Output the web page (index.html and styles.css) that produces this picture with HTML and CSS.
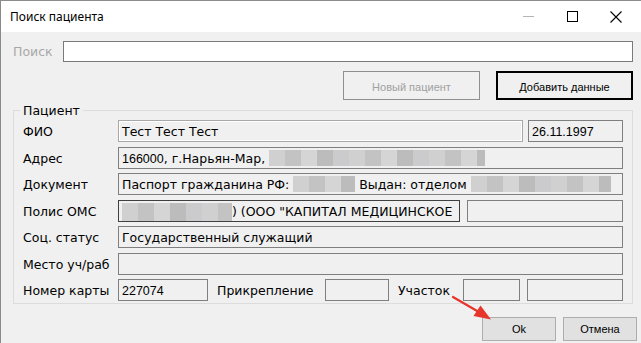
FILE: index.html
```html
<!DOCTYPE html>
<html lang="ru">
<head>
    <meta charset="UTF-8">
    <meta name="viewport" content="width=device-width, initial-scale=1.0">
    <title>Поиск пациента</title>
    <link rel="stylesheet" href="styles.css">
</head>
<body>
    <div class="window">
        <div class="titlebar">
            <span class="title">Поиск пациента</span>
            <div class="caption-buttons">
                <span class="caption-btn">
                    <svg width="11" height="11" viewBox="0 0 11 11"><path d="M0 5.5h11" stroke="#b4b4b4" stroke-width="1"/></svg>
                </span>
                <span class="caption-btn">
                    <svg width="11" height="11" viewBox="0 0 11 11"><rect x="0.5" y="0.5" width="10" height="10" fill="none" stroke="#000" stroke-width="1"/></svg>
                </span>
                <span class="caption-btn">
                    <svg width="12" height="12" viewBox="0 0 12 12"><path d="M0.5 0.5L11.5 11.5M11.5 0.5L0.5 11.5" stroke="#000" stroke-width="1.1"/></svg>
                </span>
            </div>
        </div>

        <div class="content">
            <div class="search-row">
                <label class="search-label" for="search">Поиск</label>
                <input class="search-input" type="text" id="search">
            </div>

            <div class="actions">
                <button class="btn btn-disabled" disabled>Новый пациент</button>
                <button class="btn btn-default">Добавить данные</button>
            </div>

            <div class="group">
                <div class="group-title">Пациент</div>
                <div class="rows">
                    <div class="row">
                        <span class="label">ФИО</span>
                        <div class="field field-light w-fio">Тест Тест Тест</div>
                        <div class="field num w-date">26.11.1997</div>
                    </div>
                    <div class="row">
                        <span class="label">Адрес</span>
                        <div class="field w-full"><span class="num">166000</span>, г.Нарьян-Мар, <span class="blur blur-addr"></span></div>
                    </div>
                    <div class="row">
                        <span class="label">Документ</span>
                        <div class="field w-full">Паспорт гражданина РФ: <span class="blur blur-doc"></span> Выдан: отделом <span class="blur blur-issued"></span></div>
                    </div>
                    <div class="row">
                        <span class="label">Полис ОМС</span>
                        <div class="field field-dark w-polis"><span class="blur blur-polis"></span>) (ООО "КАПИТАЛ МЕДИЦИНСКОЕ</div>
                        <div class="field w-polis-extra"></div>
                    </div>
                    <div class="row">
                        <span class="label">Соц. статус</span>
                        <div class="field w-full">Государственный служащий</div>
                    </div>
                    <div class="row">
                        <span class="label">Место уч/раб</span>
                        <div class="field w-full"></div>
                    </div>
                    <div class="row">
                        <span class="label">Номер карты</span>
                        <div class="field num w-card">227074</div>
                        <span class="label label-inline w-attach">Прикрепление</span>
                        <div class="field w-attach-box"></div>
                        <span class="label label-inline w-area">Участок</span>
                        <div class="field w-area-box"></div>
                        <div class="field w-area-extra"></div>
                    </div>
                </div>
            </div>
        </div>

        <div class="footer">
            <button class="btn-dialog">Ok</button>
            <button class="btn-dialog">Отмена</button>
        </div>

        <!-- annotation arrow -->
        <svg class="arrow" width="641" height="343" viewBox="0 0 641 343">
            <path d="M453 297L478 311.5" stroke="#e8352b" stroke-width="2.2" stroke-linecap="round"/>
            <path d="M491 319.5L473.5 316L480.5 305.5Z" fill="#e8352b"/>
        </svg>
    </div>
</body>
</html>
```

FILE: styles.css
```css
/* Reset default margin and padding */
* {
    margin: 0;
    padding: 0;
    box-sizing: border-box;
}

body {
    background-color: #f0f0f0;
    color: #000;
    font-family: "DejaVu Sans", sans-serif;
    font-size: 12.5px;
}

/* Window frame */
.window {
    position: relative;
    width: 641px;
    height: 343px;
    overflow: hidden;
    background-color: #f0f0f0;
    border-top: 1px solid #8c8c8c;
    border-left: 1px solid #8a8a8a;
}

.titlebar {
    display: flex;
    justify-content: space-between;
    align-items: center;
    height: 31px;
    background-color: #fff;
}

.title {
    padding-left: 9px;
    font-family: "Noto Sans", sans-serif;
    font-size: 12px;
    line-height: 31px;
}

.caption-buttons {
    display: flex;
    padding-right: 3px;
}

.caption-btn {
    display: flex;
    justify-content: center;
    align-items: center;
    width: 44px;
    height: 31px;
}

/* Main area */
.content {
    padding: 0 8px 0 12px;
}

.search-row {
    display: flex;
    margin-top: 9px;
    height: 21px;
}

.search-label {
    width: 50px;
    color: #a8a8a8;
    line-height: 21px;
}

.search-input {
    flex: 1;
    height: 21px;
    border: 1px solid #7a7a7a;
    background-color: #fff;
    outline: none;
}

.actions {
    display: flex;
    justify-content: flex-end;
    gap: 16px;
    margin-top: 9px;
}

.btn {
    width: 137px;
    height: 29px;
    padding-top: 3px;
    font-family: "Liberation Sans", sans-serif;
    font-size: 11px;
    background-color: #f0f0f0;
    color: #000;
}

.btn-disabled {
    border: 1px solid #8f8f8f;
    color: #a0a0a0;
}

.btn-default {
    border: 2px solid #000;
}

/* Group box */
.group {
    margin-top: 10px;
    padding: 0 9px 2px 9px;
    border: 1px solid #dcdcdc;
}

.group-title {
    width: fit-content;
    margin: -7px 0 0 -3px;
    padding: 0 3px;
    line-height: 14px;
    background-color: #f0f0f0;
}

.rows {
    display: flex;
    flex-direction: column;
    gap: 4.5px;
    margin-top: 2px;
}

.row {
    display: flex;
    height: 22px;
}

.label {
    width: 95px;
    padding-top: 3px;
    line-height: 18px;
    white-space: nowrap;
}

.label-inline {
    padding-left: 9px;
}

.field {
    height: 22px;
    padding: 2px 0 0 3px;
    line-height: 18px;
    white-space: nowrap;
    overflow: hidden;
    border: 1px solid #7f7f7f;
    background-color: #f0f0f0;
}

.field-light {
    border-color: #a8a8a8;
    box-shadow: inset 0 0 0 1px #fff;
}

.field-dark {
    border-color: #404040;
}

.num {
    font-family: "Liberation Sans", sans-serif;
}

.w-fio { width: 405px; margin-right: 5px; }
.w-date { width: 95px; }
.w-full { width: 505px; }
.w-polis { width: 342px; margin-right: 7px; }
.w-polis-extra { width: 156px; }
.w-card { width: 90px; }
.w-attach { width: 117px; }
.w-attach-box { width: 64px; }
.w-area { width: 74px; }
.w-area-box { width: 57px; margin-right: 7px; }
.w-area-extra { width: 96px; }

/* Hidden personal data */
.blur {
    display: inline-block;
    height: 16px;
    vertical-align: top;
    background: repeating-linear-gradient(90deg,
        #d0d0d0 0 16px,
        #c3c3c3 16px 32px,
        #d6d5d6 32px 48px,
        #bdbcbd 48px 64px,
        #cbcacc 64px 80px);
}

.blur-addr { width: 216px; }
.blur-doc { width: 62px; }
.blur-issued { width: 140px; }
.blur-polis { width: 110px; height: 18px; }

/* Dialog buttons */
.footer {
    display: flex;
    justify-content: flex-end;
    gap: 7px;
    margin-top: 13px;
    padding-right: 4px;
}

.btn-dialog {
    width: 74px;
    height: 24px;
    font-family: "Liberation Sans", sans-serif;
    font-size: 11px;
    color: #000;
    background-color: #e1e1e1;
    border: 1px solid #adadad;
}

.arrow {
    position: absolute;
    top: -1px;
    left: -1px;
    pointer-events: none;
}
```
